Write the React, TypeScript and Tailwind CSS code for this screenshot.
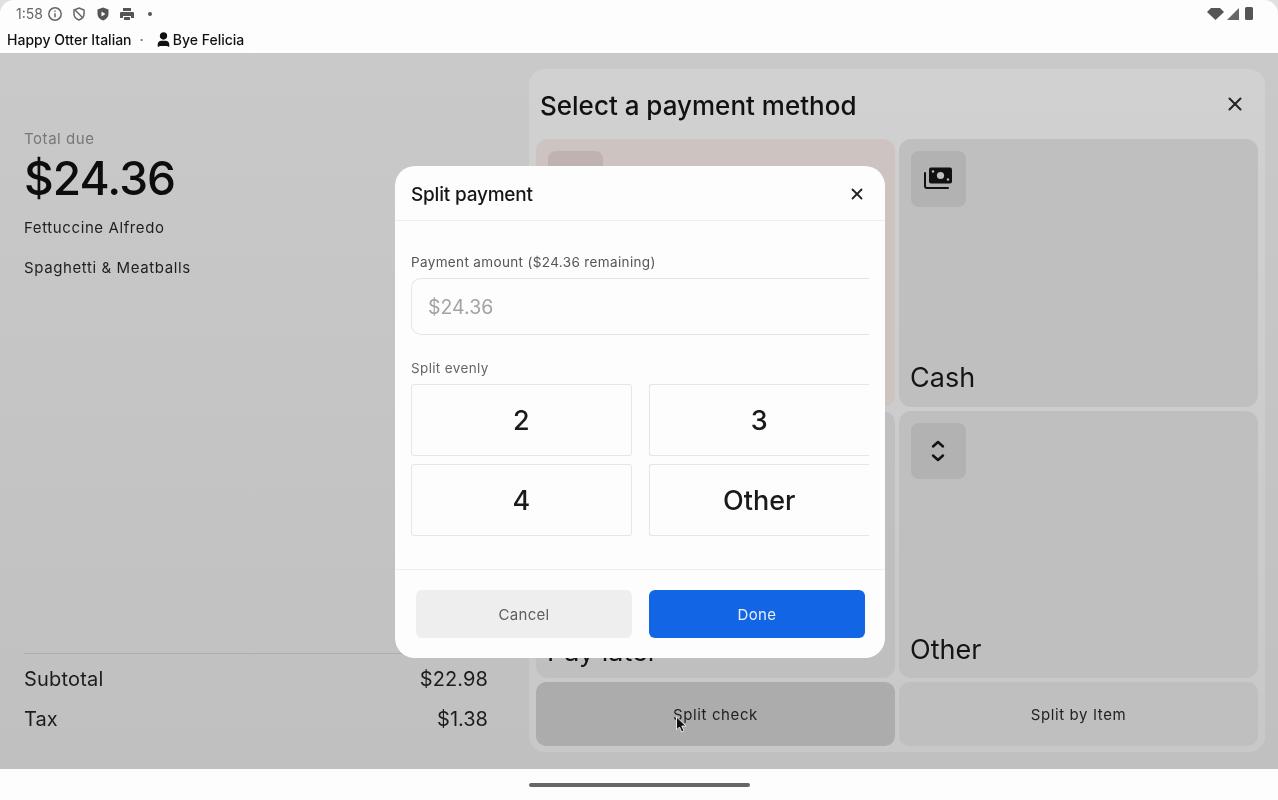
import React from "react";
import { X, User } from "lucide-react";

const Money = () => (
  <svg width="30" height="24" viewBox="0 0 30 24" fill="none">
    <path d="M6 2.500a2 2 0 0 1 2-2h19a2 2 0 0 1 2 2v12a2 2 0 0 1-2 2H8a2 2 0 0 1-2-2z" fill="#111" />
    <circle cx="17.500" cy="8.500" r="3.600" fill="#c0c0c0" />
    <circle cx="10" cy="4.500" r="1.200" fill="#c0c0c0" />
    <circle cx="25" cy="12.500" r="1.200" fill="#c0c0c0" />
    <path d="M2 6v13a2 2 0 0 0 2 2h21" stroke="#111" strokeWidth="2" strokeLinecap="round" />
  </svg>
);

const Chevrons = () => (
  <svg width="14" height="22" viewBox="0 0 14 22" fill="none" stroke="#111" strokeWidth="2.400" strokeLinecap="round" strokeLinejoin="round">
    <path d="M2 6.500 7 2l5 4.500" />
    <path d="M2 15.500 7 20l5-4.500" />
  </svg>
);

const StatusIcons = () => (
  <div className="flex items-center gap-[8px] text-[#555]">
    <svg width="16" height="16" viewBox="0 0 16 16" fill="none" stroke="#666" strokeWidth="1.500"><circle cx="8" cy="8" r="6.200" /><path d="M8 7.200v4M8 4.400v1.400" /></svg>
    <svg width="16" height="16" viewBox="0 0 16 16" fill="none" stroke="#666" strokeWidth="1.500"><path d="M8 2l5 2v4c0 3-2.200 5-5 6-2.800-1-5-3-5-6V4z" /><path d="M4 4l8 8" /></svg>
    <svg width="16" height="16" viewBox="0 0 16 16" fill="#555"><path d="M8 1.500l5.500 2v4.500c0 3.200-2.400 5.400-5.500 6.500-3.100-1.100-5.500-3.300-5.500-6.500V3.500z" /><path d="M6.500 5.500v5l4-2.500z" fill="#fff" /></svg>
    <svg width="16" height="16" viewBox="0 0 16 16" fill="#555"><path d="M4 2h8v3H4zM2 6h12a1 1 0 0 1 1 1v5h-3v-2H4v2H1V7a1 1 0 0 1 1-1zM5 11h6v3H5z" /></svg>
    <span className="ml-[5px] w-[4px] h-[4px] rounded-full bg-[#555]" />
  </div>
);

const Card = ({ tint, icon, label, bottom }: { tint?: boolean; icon?: React.ReactNode; label: string; bottom: string }) => (
  <div className={`rounded-[12px] pl-[11px] pt-[12px] flex flex-col justify-between ${bottom} ${tint ? "bg-[#cdc3c1]" : "bg-[#bfbfbf]"}`}>
    <div className={`ml-px w-[55px] h-[56px] pr-[2px] rounded-[8px] flex items-center justify-center ${tint ? "bg-[#bfb2b1]" : "bg-[#b2b2b2]"}`}>{icon}</div>
    <div className="text-[27px] leading-[32px] text-[#141414]">{label}</div>
  </div>
);

const SplitBtn = ({ children, open }: { children: React.ReactNode; open?: boolean }) => (
  <div className={`h-[72px] pt-[2px] border border-[#e6e6e6] rounded-[3px] flex items-center justify-center text-[27px] font-medium text-[#1a1a1a] ${open ? "border-r-0 rounded-r-none" : ""}`}>{children}</div>
);

export default function App() {
  return (
    <div className="relative w-[1278px] h-[800px] overflow-hidden flex flex-col bg-[#e0e0e0] font-['Inter',sans-serif] blur-[0.4px]">
      <header className="h-[53px] bg-[#fdfdfd] flex flex-col pl-[7px] shrink-0 rounded-t-[14px]">
        <div className="h-[27px] flex items-center justify-between pl-[9px] pr-[25px]">
          <div className="flex items-center gap-[4px]">
            <span className="text-[14px] text-[#666]">1:58</span>
            <StatusIcons />
          </div>
          <div className="flex items-center gap-[3px]">
            <svg width="17" height="12" viewBox="0 0 17 12" fill="#555"><path d="M0 4l4-4h9l4 4-8.500 8z" /></svg>
            <svg width="12" height="12" viewBox="0 0 12 12" fill="#666"><path d="M0 12 12 0v12z" /></svg>
            <svg className="ml-[3px]" width="8" height="13" viewBox="0 0 8 13" fill="#555"><rect width="8" height="13" rx="1.500" /></svg>
          </div>
        </div>
        <div className="h-[24px] flex items-center text-[14px] font-medium text-[#111]">
          <span>Happy Otter Italian</span>
          <span className="mx-[8px] text-[#666]">·</span>
          <User size={17} fill="#111" strokeWidth={2.400} className="ml-[3px]" />
          <span className="ml-px">Bye Felicia</span>
        </div>
      </header>

      <main className="flex-1 bg-linear-to-b from-[#c9c9c9] to-[#c0c0c0] flex min-h-0 pt-[16px] pb-[17px] pr-[13px]">
        <section className="w-[529px] shrink-0 pl-[24px] pr-[41px] flex flex-col">
          <div className="pt-[60px] text-[15px] leading-[20px] text-[#777] tracking-[0.55px]">Total due</div>
          <div className="text-[46px] leading-[56px] font-medium text-[#0d0d0d] tracking-[-0.9px] mt-[1px]">$24.36</div>
          <div className="mt-[11.500px] text-[15px] leading-[20px] text-[#1f1f1f] tracking-[0.6px]">Fettuccine Alfredo</div>
          <div className="mt-[20px] text-[15px] leading-[20px] text-[#1f1f1f] tracking-[0.6px]">Spaghetti &amp; Meatballs</div>
          <div className="mt-auto border-t border-[#aeaeae] pt-[11px] pb-[19px] text-[20px] text-[#1c1c1c]">
            <div className="flex justify-between leading-[28px]"><span className="tracking-[0.2px]">Subtotal</span><span className="tracking-[0.1px]">$22.98</span></div>
            <div className="flex justify-between leading-[28px] mt-[12px]"><span>Tax</span><span>$1.38</span></div>
          </div>
        </section>

        <section className="flex-1 bg-linear-to-b from-[#d1d1d1] to-[#c8c8c8] rounded-[16px] flex flex-col min-w-0 px-[7px] pb-[6px]">
          <div className="h-[70px] shrink-0 flex items-center justify-between pl-[4px] pr-[12px]">
            <span className="pt-[2px] text-[26px] font-medium text-[#111]">Select a payment method</span>
            <X size={22} strokeWidth={2.200} className="text-[#222]" />
          </div>
          <div className="flex-1 grid grid-cols-2 grid-rows-[268px_267px_64px] gap-x-[4px] gap-y-[4px]">
            <Card tint label="Card" bottom="pb-[13px]" />
            <Card icon={<Money />} label="Cash" bottom="pb-[13px]" />
            <Card label="Pay later" bottom="pb-[10px]" />
            <Card icon={<Chevrons />} label="Other" bottom="pb-[12px]" />
            <div className="rounded-[10px] pt-[2px] bg-[#acacac] flex items-center justify-center text-[15px] tracking-[0.6px] text-[#1f1f1f]">Split check</div>
            <div className="rounded-[10px] pt-[2px] bg-[#bfbfbf] flex items-center justify-center text-[15px] tracking-[0.6px] text-[#1f1f1f]">Split by Item</div>
          </div>
        </section>
      </main>

      <footer className="h-[31px] shrink-0 bg-[#fdfdfd] flex items-center justify-center">
        <div className="w-[221px] h-[4px] rounded-full bg-[#666] mb-[-1px]" />
      </footer>

      <div className="absolute left-[395px] top-[166px] w-[490px] h-[492px] bg-[#fdfdfd] rounded-[20px] flex flex-col overflow-hidden">
        <div className="h-[55px] shrink-0 border-b border-[#eeeeee] flex items-center justify-between pl-[16px] pr-[19px]">
          <span className="pt-[4px] text-[19px] font-medium tracking-[-0.2px] text-[#161616]">Split payment</span>
          <X size={18} strokeWidth={2.400} className="text-[#222] mt-[1px]" />
        </div>
        <div className="flex-1 pl-[16px] pr-[16px]">
          <div className="mt-[32px] text-[13.500px] leading-[18px] tracking-[0.36px] text-[#555]">Payment amount ($24.36 remaining)</div>
          <div className="mt-[7px] w-[458px] h-[57px] pt-[2px] border border-r-0 border-[#e6e6e6] rounded-l-[10px] flex items-center pl-[16px] text-[19.500px] text-[#a3a3a3]">$24.36</div>
          <div className="mt-[24px] text-[13.500px] leading-[18px] tracking-[0.35px] text-[#666]">Split evenly</div>
          <div className="mt-[7px] w-[458px] grid grid-cols-2 gap-x-[17px] gap-y-[8px]">
            <SplitBtn>2</SplitBtn>
            <SplitBtn open>3</SplitBtn>
            <SplitBtn>4</SplitBtn>
            <SplitBtn open>Other</SplitBtn>
          </div>
        </div>
        <div className="h-[89px] shrink-0 border-t border-[#eeeeee] pt-[20px] pl-[21px] pr-[20px] grid grid-cols-2 gap-x-[17px]">
          <div className="h-[48px] pt-[2px] rounded-[6px] bg-[#eeeeee] flex items-center justify-center text-[15px] tracking-[0.3px] text-[#5f5f5f]">Cancel</div>
          <div className="h-[48px] pt-[2px] rounded-[6px] bg-[#1266e6] flex items-center justify-center text-[15px] tracking-[0.4px] text-[#e8eefc]">Done</div>
        </div>
      </div>

      <svg className="absolute left-[675px] top-[716px]" width="13" height="18" viewBox="0 0 13 18">
        <path d="M1.500 1v13l3-3 2.200 5 2.300-1-2.200-5h4.200z" fill="#111" stroke="#e5e5e5" strokeWidth="1" />
      </svg>
    </div>
  );
}
